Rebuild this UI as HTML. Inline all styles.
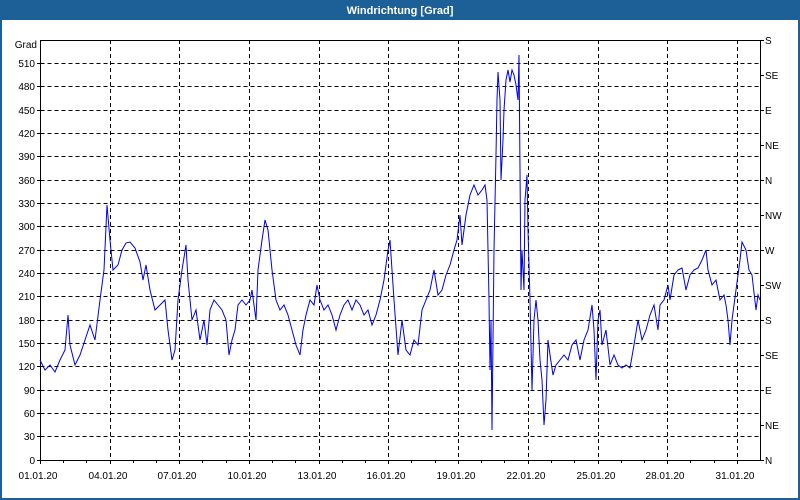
<!DOCTYPE html>
<html><head><meta charset="utf-8"><style>
html,body{margin:0;padding:0;width:800px;height:500px;overflow:hidden;background:#fff}
</style></head><body>
<svg width="800" height="500" xmlns="http://www.w3.org/2000/svg" font-family="Liberation Sans, sans-serif" font-size="10">
<rect x="0" y="0" width="800" height="500" fill="#1d5f97"/>
<rect x="2" y="20" width="796" height="478" fill="#fff"/>
<text x="400" y="14" fill="#fff" font-weight="bold" font-size="11" text-anchor="middle">Windrichtung [Grad]</text>
<g stroke="#000" stroke-dasharray="4,3" stroke-width="1">
<path d="M40.5 63.5H760M40.5 86.5H760M40.5 110.5H760M40.5 133.5H760M40.5 156.5H760M40.5 180.5H760M40.5 203.5H760M40.5 226.5H760M40.5 250.5H760M40.5 273.5H760M40.5 296.5H760M40.5 320.5H760M40.5 343.5H760M40.5 366.5H760M40.5 390.5H760M40.5 413.5H760M40.5 436.5H760"/>
<path d="M110.5 40V460M179.5 40V460M249.5 40V460M319.5 40V460M388.5 40V460M458.5 40V460M528.5 40V460M598.5 40V460M667.5 40V460M737.5 40V460"/>
</g>
<path d="M40.5 40V460.5H760.5V40M40 40.5H760" stroke="#000" fill="none"/>
<g stroke="#000">
<path d="M37 63.5h4M37 86.5h4M37 110.5h4M37 133.5h4M37 156.5h4M37 180.5h4M37 203.5h4M37 226.5h4M37 250.5h4M37 273.5h4M37 296.5h4M37 320.5h4M37 343.5h4M37 366.5h4M37 390.5h4M37 413.5h4M37 436.5h4M37 460.5h4"/>
<path d="M760 40.5h4M760 75.5h4M760 110.5h4M760 145.5h4M760 180.5h4M760 215.5h4M760 250.5h4M760 285.5h4M760 320.5h4M760 355.5h4M760 390.5h4M760 425.5h4M760 460.5h4"/>
<path d="M40.5 460v4M63.5 460v3M86.5 460v3M110.5 460v4M133.5 460v3M156.5 460v3M179.5 460v4M202.5 460v3M226.5 460v3M249.5 460v4M272.5 460v3M295.5 460v3M319.5 460v4M342.5 460v3M365.5 460v3M388.5 460v4M411.5 460v3M435.5 460v3M458.5 460v4M481.5 460v3M504.5 460v3M528.5 460v4M551.5 460v3M574.5 460v3M598.5 460v4M621.5 460v3M644.5 460v3M667.5 460v4M690.5 460v3M714.5 460v3M737.5 460v4"/>
</g>
<g fill="#000" text-anchor="end">
<text x="37" y="48">Grad</text>
<text x="35" y="67">510</text><text x="35" y="90">480</text><text x="35" y="114">450</text><text x="35" y="137">420</text><text x="35" y="160">390</text><text x="35" y="184">360</text><text x="35" y="207">330</text><text x="35" y="230">300</text><text x="35" y="254">270</text><text x="35" y="277">240</text><text x="35" y="300">210</text><text x="35" y="324">180</text><text x="35" y="347">150</text><text x="35" y="370">120</text><text x="35" y="394">90</text><text x="35" y="417">60</text><text x="35" y="440">30</text><text x="35" y="464">0</text>
</g>
<g fill="#000">
<text x="765" y="44">S</text><text x="765" y="79">SE</text><text x="765" y="114">E</text><text x="765" y="149">NE</text><text x="765" y="184">N</text><text x="765" y="219">NW</text><text x="765" y="254">W</text><text x="765" y="289">SW</text><text x="765" y="324">S</text><text x="765" y="359">SE</text><text x="765" y="394">E</text><text x="765" y="429">NE</text><text x="765" y="464">N</text>
</g>
<g fill="#000" text-anchor="middle">
<text x="38" y="479">01.01.20</text><text x="108" y="479">04.01.20</text><text x="177" y="479">07.01.20</text><text x="247" y="479">10.01.20</text><text x="317" y="479">13.01.20</text><text x="386" y="479">16.01.20</text><text x="456" y="479">19.01.20</text><text x="526" y="479">22.01.20</text><text x="596" y="479">25.01.20</text><text x="665" y="479">28.01.20</text><text x="735" y="479">31.01.20</text>
</g>
<polyline fill="none" stroke="#0000ee" stroke-width="1" points="40,360 45,370 50,365 55,372 60,360 65,350 68,315 70,345 75,365 80,355 85,340 90,325 95,340 100,300 104,270 107,205 110,240 113,270 118,265 122,250 126,243 130,242 135,248 140,262 143,280 146,265 150,290 155,310 160,305 165,300 168,330 172,360 175,350 178,300 182,270 186,245 188,280 192,320 196,310 200,340 204,320 207,345 210,310 214,300 218,305 222,310 226,320 229,355 232,340 235,330 238,305 242,300 246,305 250,300 252,290 256,320 258,270 262,240 265,220 268,230 272,270 276,300 280,310 284,305 288,315 292,330 296,345 300,355 303,330 306,315 310,300 314,305 317,285 320,300 324,310 328,305 332,315 336,330 340,315 344,305 348,300 352,310 356,300 360,305 364,315 368,310 372,325 376,315 380,300 384,280 388,250 390,240 394,300 398,355 402,320 406,350 410,355 414,340 418,345 422,310 426,300 430,290 434,270 438,295 442,290 446,275 450,265 454,250 457,240 460,215 462,245 466,215 470,195 474,185 478,195 482,190 485,185 487,200 488,250 489,300 490,370 491,320 492,430 494,250 496,155 497,100 498,72 500,100 501,180 503,140 504,110 506,80 508,70 510,82 512,70 514,75 516,85 518,100 519,55 520,170 521,290 522,250 524,290 525,200 527,175 528,230 530,300 532,390 534,320 536,300 538,320 540,360 542,380 544,425 546,400 548,340 550,355 553,375 556,365 560,360 564,355 568,360 572,345 576,340 580,360 584,340 588,330 592,305 594,330 596,380 598,320 600,310 602,345 606,330 610,365 614,355 618,365 622,368 626,365 630,368 634,345 638,320 642,340 646,330 650,315 654,305 658,330 660,305 664,300 668,285 670,300 674,275 678,270 682,268 686,290 690,275 694,270 698,268 702,260 706,250 708,270 712,285 716,280 720,300 724,295 726,305 728,320 730,345 732,320 736,290 740,260 742,242 746,250 749,270 752,275 756,310 758,295 760,300"/>
</svg>
</body></html>
